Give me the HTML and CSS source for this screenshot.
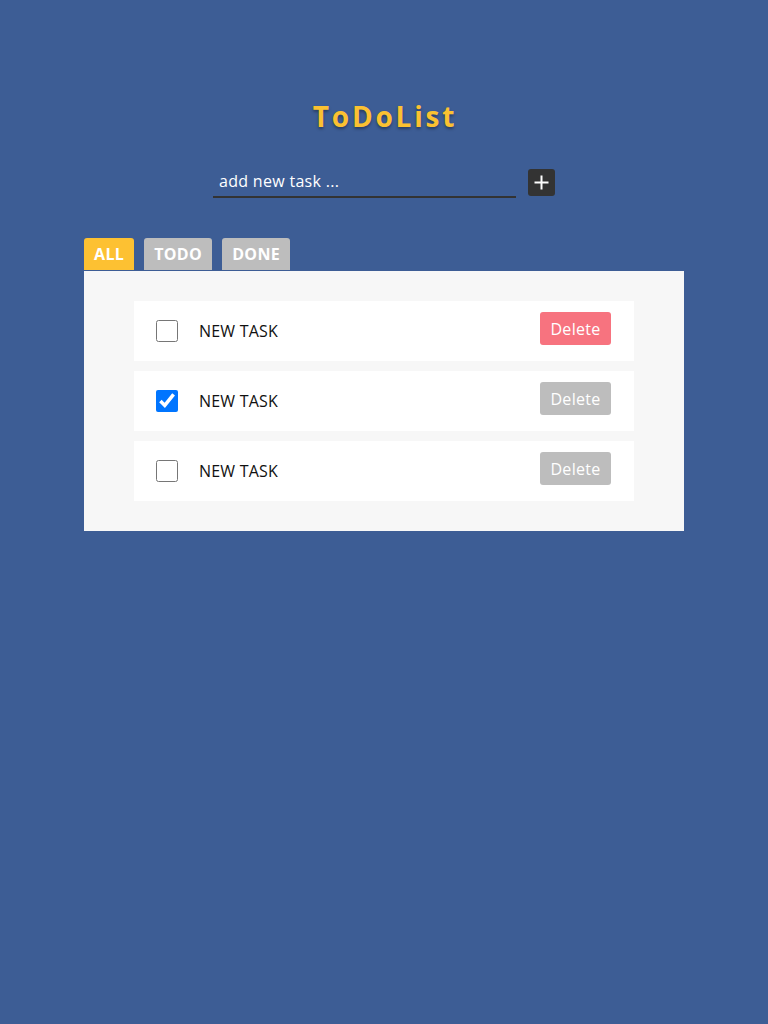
FILE: index.html
```html
<!DOCTYPE html>
<html>
<head>
<meta charset="utf-8">
<link rel="stylesheet" href="styles.css">
</head>
<body>
<div class="app">
  <h1 class="title">ToDoList</h1>
  <div class="add-row">
    <input class="add-input" type="text" placeholder="add new task ...">
    <button class="add-btn" aria-label="add">
      <svg width="17" height="17" viewBox="0 0 17 17"><path d="M8.5 1.5v14M1.5 8.5h14" stroke="#fff" stroke-width="2" fill="none"/></svg>
    </button>
  </div>
  <div class="tabs">
    <button class="tab active">ALL</button>
    <button class="tab">TODO</button>
    <button class="tab">DONE</button>
  </div>
  <div class="panel">
    <div class="item">
      <input class="check" type="checkbox">
      <span class="label">NEW TASK</span>
      <button class="del hot">Delete</button>
    </div>
    <div class="item">
      <input class="check" type="checkbox" checked>
      <span class="label">NEW TASK</span>
      <button class="del">Delete</button>
    </div>
    <div class="item">
      <input class="check" type="checkbox">
      <span class="label">NEW TASK</span>
      <button class="del">Delete</button>
    </div>
  </div>
</div>
</body>
</html>
```
FILE: styles.css
```css
html, body {
  margin: 0;
  padding: 0;
  background: #3d5d95;
  min-height: 1024px;
  font-family: "Open Sans", "Noto Sans", sans-serif;
}
.app {
  width: 600px;
  margin: 0 auto;
  padding-top: 97px;
}
.title {
  margin: 0;
  padding-left: 2px;
  text-align: center;
  color: #fbc131;
  font-size: 28px;
  font-weight: 700;
  letter-spacing: 2.8px;
  line-height: 38px;
  text-shadow: 0 2px 3px rgba(0, 0, 0, 0.35);
}
.add-row {
  display: flex;
  justify-content: center;
  align-items: flex-start;
  margin-top: 34px;
  gap: 12px;
}
.add-input {
  width: 303px;
  box-sizing: border-box;
  height: 29px;
  padding: 0 5px 3px 6px;
  border: none;
  border-bottom: 2px solid #333;
  background: transparent;
  color: #fff;
  font-family: "Open Sans", sans-serif;
  font-size: 16px;
  letter-spacing: 0.3px;
  outline: none;
}
.add-input::placeholder {
  color: #fff;
  opacity: 1;
}
.add-btn {
  width: 27px;
  height: 27px;
  padding: 0;
  margin: 0;
  border: none;
  border-radius: 3px;
  background: #333;
  display: flex;
  align-items: center;
  justify-content: center;
}
.tabs {
  display: flex;
  gap: 10px;
  margin-top: 40px;
}
.tab {
  height: 32px;
  padding: 0 10px;
  border: none;
  border-radius: 3px 3px 0 0;
  background: #bdbdbd;
  color: #fff;
  font-family: "Open Sans", sans-serif;
  font-weight: 700;
  font-size: 16px;
  letter-spacing: 0.35px;
  line-height: 32px;
}
.tab.active {
  background: #fdc132;
}
.panel {
  margin-top: 1px;
  background: #f7f7f7;
  padding: 30px 50px;
  display: flex;
  flex-direction: column;
  gap: 10px;
}
.item {
  height: 60px;
  background: #fff;
  display: flex;
  align-items: center;
  padding: 0 23px 0 22px;
}
.check {
  width: 22px;
  height: 22px;
  margin: 0;
  flex: none;
}
.label {
  margin-left: 21px;
  flex: 1;
  font-size: 16px;
  letter-spacing: 0.2px;
  color: #111;
}
.del {
  width: 71px;
  height: 33px;
  margin-top: -5px;
  border: none;
  border-radius: 3px;
  background: #bdbdbd;
  color: #fff;
  font-family: "Open Sans", sans-serif;
  font-size: 16px;
  letter-spacing: 0.3px;
  padding: 0;
}
.del.hot {
  background: #f7737f;
}
```
